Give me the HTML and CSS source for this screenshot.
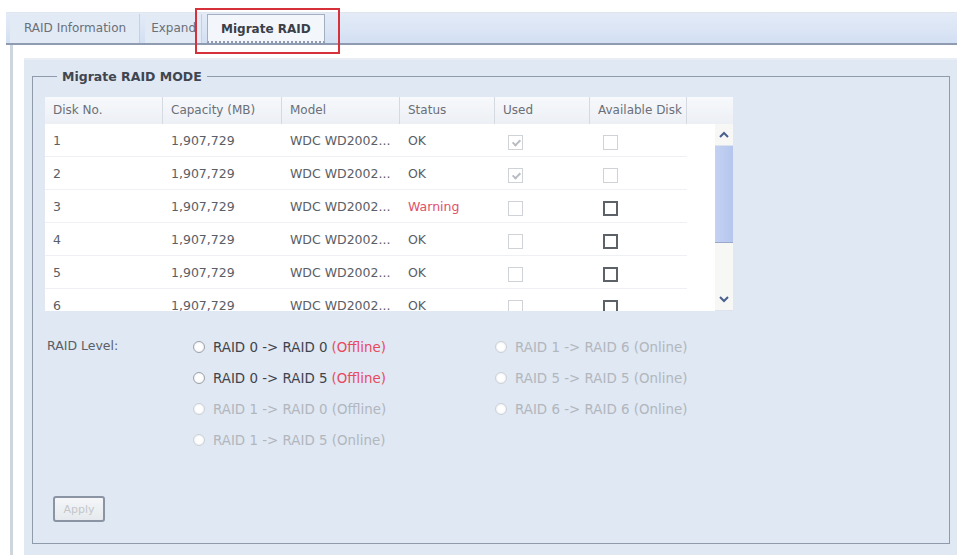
FILE: index.html
```html
<!DOCTYPE html>
<html lang="en">
<head>
    <meta charset="UTF-8">
    <title>Migrate RAID</title>
    <link rel="stylesheet" href="styles.css">
</head>
<body>
    <div class="tabs">
        <a class="tab">RAID Information</a>
        <a class="tab">Expand</a>
        <a class="tab active">Migrate RAID<span class="mark"></span></a>
    </div>

    <div class="content">
        <div class="panel">
            <fieldset class="mode">
                <legend>Migrate RAID MODE</legend>

                <div class="grid">
                    <div class="grid-head">
                        <div class="c c1">Disk No.</div>
                        <div class="c c2">Capacity (MB)</div>
                        <div class="c c3">Model</div>
                        <div class="c c4">Status</div>
                        <div class="c c5">Used</div>
                        <div class="c c6">Available Disk</div>
                        <div class="c c7"></div>
                    </div>
                    <div class="grid-body">
                        <div class="rows">
                            <div class="row">
                                <div class="c c1">1</div>
                                <div class="c c2">1,907,729</div>
                                <div class="c c3">WDC WD2002...</div>
                                <div class="c c4">OK</div>
                                <div class="c c5"><span class="cb off checked"></span></div>
                                <div class="c c6"><span class="cb off"></span></div>
                            </div>
                            <div class="row">
                                <div class="c c1">2</div>
                                <div class="c c2">1,907,729</div>
                                <div class="c c3">WDC WD2002...</div>
                                <div class="c c4">OK</div>
                                <div class="c c5"><span class="cb off checked"></span></div>
                                <div class="c c6"><span class="cb off"></span></div>
                            </div>
                            <div class="row">
                                <div class="c c1">3</div>
                                <div class="c c2">1,907,729</div>
                                <div class="c c3">WDC WD2002...</div>
                                <div class="c c4 warn">Warning</div>
                                <div class="c c5"><span class="cb off"></span></div>
                                <div class="c c6"><span class="cb"></span></div>
                            </div>
                            <div class="row">
                                <div class="c c1">4</div>
                                <div class="c c2">1,907,729</div>
                                <div class="c c3">WDC WD2002...</div>
                                <div class="c c4">OK</div>
                                <div class="c c5"><span class="cb off"></span></div>
                                <div class="c c6"><span class="cb"></span></div>
                            </div>
                            <div class="row">
                                <div class="c c1">5</div>
                                <div class="c c2">1,907,729</div>
                                <div class="c c3">WDC WD2002...</div>
                                <div class="c c4">OK</div>
                                <div class="c c5"><span class="cb off"></span></div>
                                <div class="c c6"><span class="cb"></span></div>
                            </div>
                            <div class="row">
                                <div class="c c1">6</div>
                                <div class="c c2">1,907,729</div>
                                <div class="c c3">WDC WD2002...</div>
                                <div class="c c4">OK</div>
                                <div class="c c5"><span class="cb off"></span></div>
                                <div class="c c6"><span class="cb"></span></div>
                            </div>
                        </div>
                        <div class="scroll">
                            <div class="arrow">
                                <svg width="10" height="7" viewBox="0 0 10 7"><path d="M1 6 L5 2 L9 6" fill="none" stroke="#4a5f8c" stroke-width="2"/></svg>
                            </div>
                            <div class="thumb"></div>
                            <div class="track"></div>
                            <div class="arrow">
                                <svg width="10" height="7" viewBox="0 0 10 7"><path d="M1 1 L5 5 L9 1" fill="none" stroke="#4a5f8c" stroke-width="2"/></svg>
                            </div>
                        </div>
                    </div>
                </div>

                <div class="levels">
                    <div class="levels-label">RAID Level:</div>
                    <div class="levels-col">
                        <label class="opt"><span class="radio"></span>RAID 0 -&gt; RAID 0 <span class="red">(Offline)</span></label>
                        <label class="opt"><span class="radio"></span>RAID 0 -&gt; RAID 5 <span class="red">(Offline)</span></label>
                        <label class="opt disabled"><span class="radio"></span>RAID 1 -&gt; RAID 0 (Offline)</label>
                        <label class="opt disabled"><span class="radio"></span>RAID 1 -&gt; RAID 5 (Online)</label>
                    </div>
                    <div class="levels-col">
                        <label class="opt disabled"><span class="radio"></span>RAID 1 -&gt; RAID 6 (Online)</label>
                        <label class="opt disabled"><span class="radio"></span>RAID 5 -&gt; RAID 5 (Online)</label>
                        <label class="opt disabled"><span class="radio"></span>RAID 6 -&gt; RAID 6 (Online)</label>
                    </div>
                </div>

                <button class="apply" disabled>Apply</button>
            </fieldset>
        </div>
    </div>
</body>
</html>
```

FILE: styles.css
```css
* {
    box-sizing: border-box;
    font-family: 'DejaVu Sans', Verdana, sans-serif;
}

body {
    margin: 0;
    background: #ffffff;
    color: #4a4a4a;
    font-size: 12.5px;
    height: 556px;
    overflow: hidden;
}

/* Onglets */
.tabs {
    display: flex;
    align-items: flex-end;
    gap: 5px;
    height: 33px;
    margin: 12px 2px 0 6px;
    padding-left: 4px;
    background: linear-gradient(#e4ebf7, #d3e0f3);
    border-top: 1px solid #e0e6ef;
    border-bottom: 2px solid #8e9bb0;
}

.tab {
    position: relative;
    display: block;
    height: 29px;
    line-height: 29px;
    padding: 0 13px 0 14px;
    font-size: 12px;
    color: #6a6f78;
    background: #e2eaf6;
    border-right: 1px solid #c5d0e2;
}

.tab + .tab {
    padding: 0 5px 0 6px;
}

.tab.active {
    padding: 0 13px;
    font-weight: bold;
    font-size: 12px;
    color: #3a3f48;
    background: #f3f6fb;
    border: 1px solid #a3aec0;
    border-bottom: 2px dotted #8e9bb0;
}

.tab .mark {
    position: absolute;
    top: -7px;
    left: -13px;
    right: -16px;
    bottom: -13px;
    border: 2px solid #d6313b;
}

/* Zone principale */
.content {
    height: 510px;
    margin: 0 2px 0 10px;
    padding: 13px 0 0 11px;
    border-left: 3px solid #cfd5dd;
}

.panel {
    height: 100%;
    padding: 9px 7px 0 8px;
    background: #dfe8f3;
    border-top: 2px solid #e9eef5;
}

.mode {
    margin: 0;
    height: 475px;
    padding: 13px 12px 0 12px;
    border: 1px solid #8f9aab;
}

.mode legend {
    margin-left: 12px;
    padding: 0 5px;
    font-size: 12.5px;
    font-weight: bold;
    color: #3f4650;
}

/* Grille des disques */
.grid {
    width: 688px;
}

.grid-head {
    display: flex;
    height: 27px;
    font-size: 12px;
    background: linear-gradient(#f7f9fc, #eceff4);
    color: #6a6f78;
}

.grid-head .c {
    border-right: 1px solid #d5dae2;
    line-height: 27px;
}

.c {
    padding-left: 8px;
    white-space: nowrap;
    overflow: hidden;
}

.c1 { width: 118px; }
.c2 { width: 119px; }
.c3 { width: 118px; }
.c4 { width: 95px; }
.c5 { width: 95px; }
.c6 { width: 97px; }
.c7 { width: 46px; border-right: none !important; }

.grid-body {
    display: flex;
    height: 187px;
    overflow: hidden;
    background: #ffffff;
}

.rows {
    width: 670px;
}

.row {
    display: flex;
    align-items: center;
    width: 642px;
    height: 33px;
    border-bottom: 1px solid #eef0f3;
    color: #5a5e66;
}

.warn {
    color: #e0506a;
}

.cb {
    display: inline-block;
    width: 15px;
    height: 15px;
    margin: 5px 0 0 5px;
    border: 2px solid #5d6168;
    background: #ffffff;
    vertical-align: middle;
}

.cb.off {
    border: 1px solid #cfd3d8;
}

.cb.checked::after {
    content: "";
    display: block;
    width: 3px;
    height: 6px;
    margin: 2px 0 0 5px;
    border: solid #b8bcc2;
    border-width: 0 2px 2px 0;
    transform: rotate(45deg);
}

/* Barre de défilement */
.scroll {
    display: flex;
    flex-direction: column;
    width: 18px;
    background: #f7f8f5;
}

.arrow {
    height: 22px;
    display: flex;
    align-items: center;
    justify-content: center;
    border-bottom: 1px solid #dde3ec;
}

.thumb {
    height: 97px;
    background: linear-gradient(90deg, #c4d1f2, #b5c6ee);
    border-bottom: 1px solid #9aa8cc;
}

.track {
    flex: 1;
}

/* Niveaux RAID */
.levels {
    display: flex;
    margin-top: 27px;
    color: #b2b6bd;
}

.levels-label {
    width: 148px;
    padding-left: 2px;
    color: #5a5e66;
}

.levels-col {
    display: flex;
    flex-direction: column;
    gap: 13px;
    width: 302px;
    font-size: 13.4px;
}

.opt {
    display: flex;
    align-items: center;
    height: 18px;
    color: #3f444c;
}

.opt.disabled {
    color: #b2b6bd;
}

.red {
    margin-left: 4px;
    color: #e8485e;
}

.radio {
    width: 12px;
    height: 12px;
    margin-right: 8px;
    border: 1px solid #9ea3aa;
    border-radius: 50%;
    background: radial-gradient(#ffffff 40%, #e3e6ea);
}

.opt.disabled .radio {
    border-color: #cdd1d6;
}

.apply {
    display: block;
    margin: 47px 0 0 8px;
    width: 52px;
    height: 26px;
    padding: 0;
    font-size: 11px;
    color: #c3c6cb;
    background: linear-gradient(#f4f6f8, #e6eaee);
    border: 2px solid #8a94a3;
    border-radius: 3px;
}
```
